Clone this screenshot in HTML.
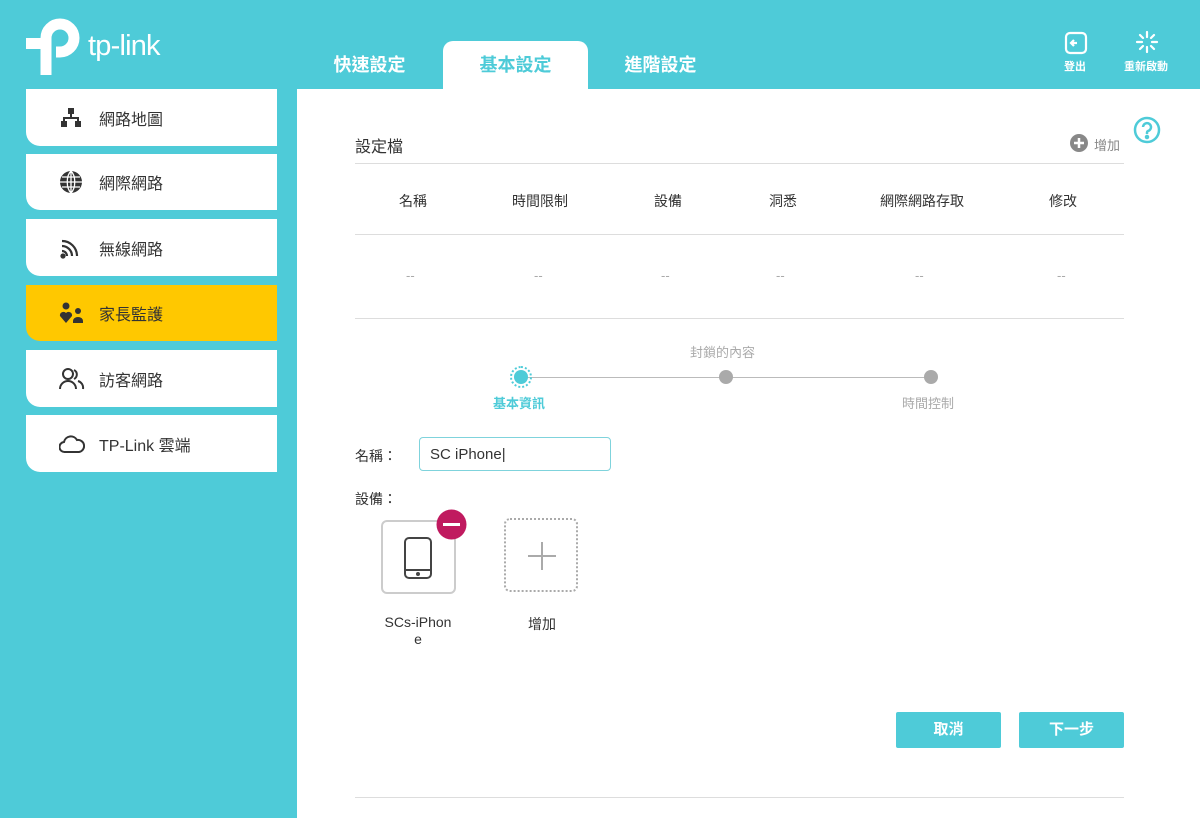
<!DOCTYPE html><html><head><meta charset="utf-8"><style>
*{margin:0;padding:0;box-sizing:border-box}
body{width:1200px;height:818px;background:#4ecbd8;font-family:"Liberation Sans","Noto Sans CJK TC",sans-serif;position:relative;overflow:hidden;color:#333}
.a{position:absolute}
.nav{left:26px;width:251px;background:#fff;border-radius:0 0 0 14px;font-size:16px;color:#333}
.nav span{position:absolute;left:73px;top:50%;transform:translateY(-50%)}
.nav svg{position:absolute;left:33px;top:50%;transform:translateY(-50%)}
.tab{top:41px;height:48px;width:145px;text-align:center;line-height:48px;font-size:18px;color:#fff;font-weight:bold}
.th{font-size:14px;color:#333;top:191px}
.td{font-size:13px;color:#aaa;top:268px}
.line{height:1px;background:#ddd;left:355px;width:769px}
.btn{top:712px;height:36px;background:#4ecbd8;color:#fff;font-size:15px;text-align:center;line-height:36px;font-weight:bold;border-radius:2px}
</style></head><body>
<svg class="a" style="left:0;top:0" width="90" height="80" viewBox="0 0 90 80"><path d="M46 75V38A14 14 0 1 1 60 52H56" fill="none" stroke="#fff" stroke-width="11"/><rect x="26" y="38" width="22" height="11" fill="#fff"/></svg>
<div class="a" style="left:88px;top:30px;font-size:29px;color:#fff;letter-spacing:-0.8px">tp-link</div>
<div class="a tab" style="left:297px">快速設定</div>
<div class="a tab" style="left:443px;background:#fff;color:#4ecbd8;border-radius:10px 10px 0 0">基本設定</div>
<div class="a tab" style="left:588px">進階設定</div>
<svg class="a" style="left:1064px;top:31px" width="24" height="24" viewBox="0 0 24 24" fill="none" stroke="#fff" stroke-width="2.2"><rect x="2" y="2" width="20" height="20" rx="4"/><path d="M13 12H7M10 9l-3 3 3 3"/></svg>
<div class="a" style="left:1064px;top:58px;font-size:11px;color:#fff;font-weight:bold">登出</div>
<svg class="a" style="left:1135px;top:30px" width="24" height="24" viewBox="0 0 24 24" stroke="#fff" stroke-width="2.2" stroke-linecap="round"><path d="M12 2v5M12 17v5M2 12h5M17 12h5M5 5l3 3M16 16l3 3M5 19l3-3M16 8l3-3"/></svg>
<div class="a" style="left:1124px;top:58px;font-size:11px;color:#fff;font-weight:bold">重新啟動</div>

<div class="a nav" style="top:89px;height:57px"><svg width="24" height="22" viewBox="0 0 24 22" fill="#333"><rect x="9" y="1" width="6" height="6"/><rect x="2" y="14" width="6" height="6"/><rect x="16" y="14" width="6" height="6"/><path d="M11 7h2v3h7v4h-2v-2H6v2H4v-4h7z"/></svg><span>網路地圖</span></div>
<div class="a nav" style="top:154px;height:56px"><svg width="24" height="24" viewBox="0 0 24 24"><circle cx="12" cy="12" r="11" fill="#333"/><path d="M1 12h22M12 1v22M3 7h18M3 17h18M12 1c-5 5-5 17 0 22M12 1c5 5 5 17 0 22" stroke="#fff" stroke-width="1.3" fill="none"/></svg><span>網際網路</span></div>
<div class="a nav" style="top:219px;height:57px"><svg width="22" height="22" viewBox="0 0 22 22" fill="none" stroke="#333" stroke-width="2.2"><path d="M3 4a15 15 0 0 1 15 15M3 9a10 10 0 0 1 10 10M3 14a5 5 0 0 1 5 5"/><circle cx="4" cy="19" r="1.5" fill="#333"/></svg><span>無線網路</span></div>
<div class="a nav" style="top:285px;height:56px;background:#ffc800"><svg width="24" height="22" viewBox="0 0 24 22" fill="#333"><circle cx="7" cy="4" r="3.5"/><path d="M7 21L1 14a3.5 3.5 0 0 1 6-3 3.5 3.5 0 0 1 6 3z"/><circle cx="19" cy="9" r="3"/><path d="M14 19a5 4 0 0 1 10 0v2h-10z"/></svg><span>家長監護</span></div>
<div class="a nav" style="top:350px;height:57px"><svg width="26" height="24" viewBox="0 0 26 24" fill="none" stroke="#333" stroke-width="2"><circle cx="9" cy="7" r="5"/><path d="M1 22a8 8 0 0 1 16 0M15 3a5 5 0 0 1 0 9M19 14a7 7 0 0 1 5 8"/></svg><span>訪客網路</span></div>
<div class="a nav" style="top:415px;height:57px"><svg width="26" height="20" viewBox="0 0 26 20" fill="none" stroke="#333" stroke-width="2"><path d="M6 18a5 5 0 0 1-1-10 7 7 0 0 1 13-2 6 6 0 0 1 2 12z"/></svg><span>TP-Link 雲端</span></div>

<div class="a" style="left:297px;top:89px;width:903px;height:729px;background:#fff"></div>
<svg class="a" style="left:1133px;top:116px" width="28" height="28" viewBox="0 0 28 28" fill="none" stroke="#4ecbd8" stroke-width="2.5"><circle cx="14" cy="14" r="12"/><path d="M10 11a4 4 0 1 1 5 4c-1 .5-1 1-1 3"/><circle cx="14" cy="21" r="1" fill="#4ecbd8"/></svg>
<div class="a" style="left:355px;top:133px;font-size:16px">設定檔</div>
<svg class="a" style="left:1070px;top:134px" width="18" height="18"><circle cx="9" cy="9" r="9" fill="#888"/><path d="M9 4v10M4 9h10" stroke="#fff" stroke-width="2.5"/></svg>
<div class="a" style="left:1094px;top:135px;font-size:13px;color:#888">增加</div>
<div class="a line" style="top:163px"></div>
<div class="a th" style="left:399px">名稱</div><div class="a th" style="left:512px">時間限制</div><div class="a th" style="left:654px">設備</div><div class="a th" style="left:769px">洞悉</div><div class="a th" style="left:880px">網際網路存取</div><div class="a th" style="left:1049px">修改</div>
<div class="a line" style="top:234px"></div>
<div class="a td" style="left:406px">--</div><div class="a td" style="left:534px">--</div><div class="a td" style="left:661px">--</div><div class="a td" style="left:776px">--</div><div class="a td" style="left:915px">--</div><div class="a td" style="left:1057px">--</div>
<div class="a line" style="top:318px"></div>
<div class="a" style="left:521px;top:377px;width:410px;height:1px;background:#bbb"></div>
<div class="a" style="left:510px;top:366px;width:22px;height:22px;border:2px dotted #4ecbd8;border-radius:50%"></div>
<div class="a" style="left:514px;top:370px;width:14px;height:14px;background:#4ecbd8;border-radius:50%"></div>
<div class="a" style="left:719px;top:370px;width:14px;height:14px;background:#aaa;border-radius:50%"></div>
<div class="a" style="left:924px;top:370px;width:14px;height:14px;background:#aaa;border-radius:50%"></div>
<div class="a" style="left:690px;top:342px;font-size:13px;color:#aaa">封鎖的內容</div>
<div class="a" style="left:493px;top:393px;font-size:13px;color:#4ecbd8;font-weight:bold">基本資訊</div>
<div class="a" style="left:902px;top:393px;font-size:13px;color:#aaa">時間控制</div>
<div class="a" style="left:355px;top:446px;font-size:14px">名稱：</div>
<div class="a" style="left:419px;top:437px;width:192px;height:34px;border:1px solid #7fd3dc;border-radius:4px;font-size:15px;padding:8px 10px">SC iPhone|</div>
<div class="a" style="left:355px;top:489px;font-size:14px">設備：</div>
<div class="a" style="left:381px;top:520px;width:75px;height:74px;border:2px solid #ccc;border-radius:6px"></div>
<svg class="a" style="left:403px;top:537px" width="30" height="42" viewBox="0 0 30 42" fill="none" stroke="#444" stroke-width="2"><rect x="2" y="1" width="26" height="40" rx="4"/><path d="M2 33h26"/><circle cx="15" cy="37" r="1" fill="#444"/></svg>
<svg class="a" style="left:436px;top:509px" width="31" height="31"><circle cx="15.5" cy="15.5" r="15" fill="#c01a5f"/><path d="M7 15.5h17" stroke="#fff" stroke-width="3"/></svg>
<div class="a" style="left:504px;top:518px;width:74px;height:74px;border:2px dotted #aaa;border-radius:6px"></div>
<svg class="a" style="left:527px;top:541px" width="30" height="30"><path d="M15 1v28M1 15h28" stroke="#aaa" stroke-width="2"/></svg>
<div class="a" style="left:378px;top:614px;width:80px;text-align:center;font-size:14px;line-height:17px">SCs-iPhon<br>e</div>
<div class="a" style="left:528px;top:614px;font-size:14px">增加</div>
<div class="a btn" style="left:896px;width:105px">取消</div>
<div class="a btn" style="left:1019px;width:105px">下一步</div>
<div class="a line" style="top:797px"></div>
</body></html>
